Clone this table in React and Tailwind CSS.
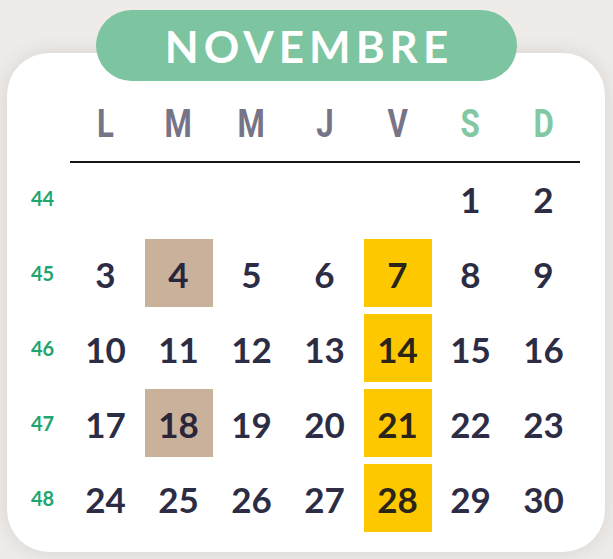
import React from "react";

const weeks = [
  { n: 44, days: [null, null, null, null, null, 1, 2] },
  { n: 45, days: [3, 4, 5, 6, 7, 8, 9] },
  { n: 46, days: [10, 11, 12, 13, 14, 15, 16] },
  { n: 47, days: [17, 18, 19, 20, 21, 22, 23] },
  { n: 48, days: [24, 25, 26, 27, 28, 29, 30] },
];
const tan = [4, 18];
const yellow = [7, 14, 21, 28];
const heads = ["L", "M", "M", "J", "V", "S", "D"];

export default function App() {
  return (
    <div className="relative w-[613px] h-[559px] bg-[#eeebe9] overflow-hidden">
      <div className="pt-[53px] pl-[7px]">
        <div className="w-[598px] h-[499px] bg-white rounded-[42px] shadow-[0_0_22px_rgba(0,0,0,0.10)]">
          <div className="grid grid-cols-[62px_repeat(7,73px)] pt-[47px] h-[95px]">
            <div />
            {heads.map((h, i) => (
              <div key={i} className="flex items-center justify-center h-[48px]">
                <span
                  className={
                    "inline-block scale-x-[0.8] text-[39px] font-bold leading-none font-['Roboto',sans-serif] " +
                    (i >= 5 ? "text-[#82c8a2]" : "text-[#767487]")
                  }
                >
                  {h}
                </span>
              </div>
            ))}
          </div>
          <div className="ml-[63px] mt-[13px] w-[510px] h-[2px] bg-[#151515]" />
          <div className="mt-[1px] flex flex-col gap-[7px]">
            {weeks.map((w) => (
              <div key={w.n} className="grid grid-cols-[62px_repeat(7,73px)] h-[68px]">
                <div className="flex items-center justify-center pl-[9px] text-[20px] font-bold text-[#1fa56f] font-['Lato',sans-serif]">
                  {w.n}
                </div>
                {w.days.map((d, i) => (
                  <div key={i} className="flex justify-center">
                    {d !== null && (
                      <div
                        className={
                          "w-[68px] h-[68px] flex items-center justify-center pt-[2px] text-[35px] font-bold font-['Lato',sans-serif] " +
                          (tan.includes(d)
                            ? "bg-[#c9b19b] text-[#29263a]"
                            : yellow.includes(d)
                            ? "bg-[#fec800] text-[#2a2518]"
                            : "text-[#2c2c44]")
                        }
                      >
                        {d}
                      </div>
                    )}
                  </div>
                ))}
              </div>
            ))}
          </div>
        </div>
      </div>
      <div className="absolute left-[96px] top-[10px] w-[421px] h-[71px] rounded-full bg-[#7cc5a0] flex items-center justify-center">
        <span className="text-white text-[44px] font-bold tracking-[5px] leading-none font-['Lato',sans-serif] pl-[5px]">
          NOVEMBRE
        </span>
      </div>
    </div>
  );
}
